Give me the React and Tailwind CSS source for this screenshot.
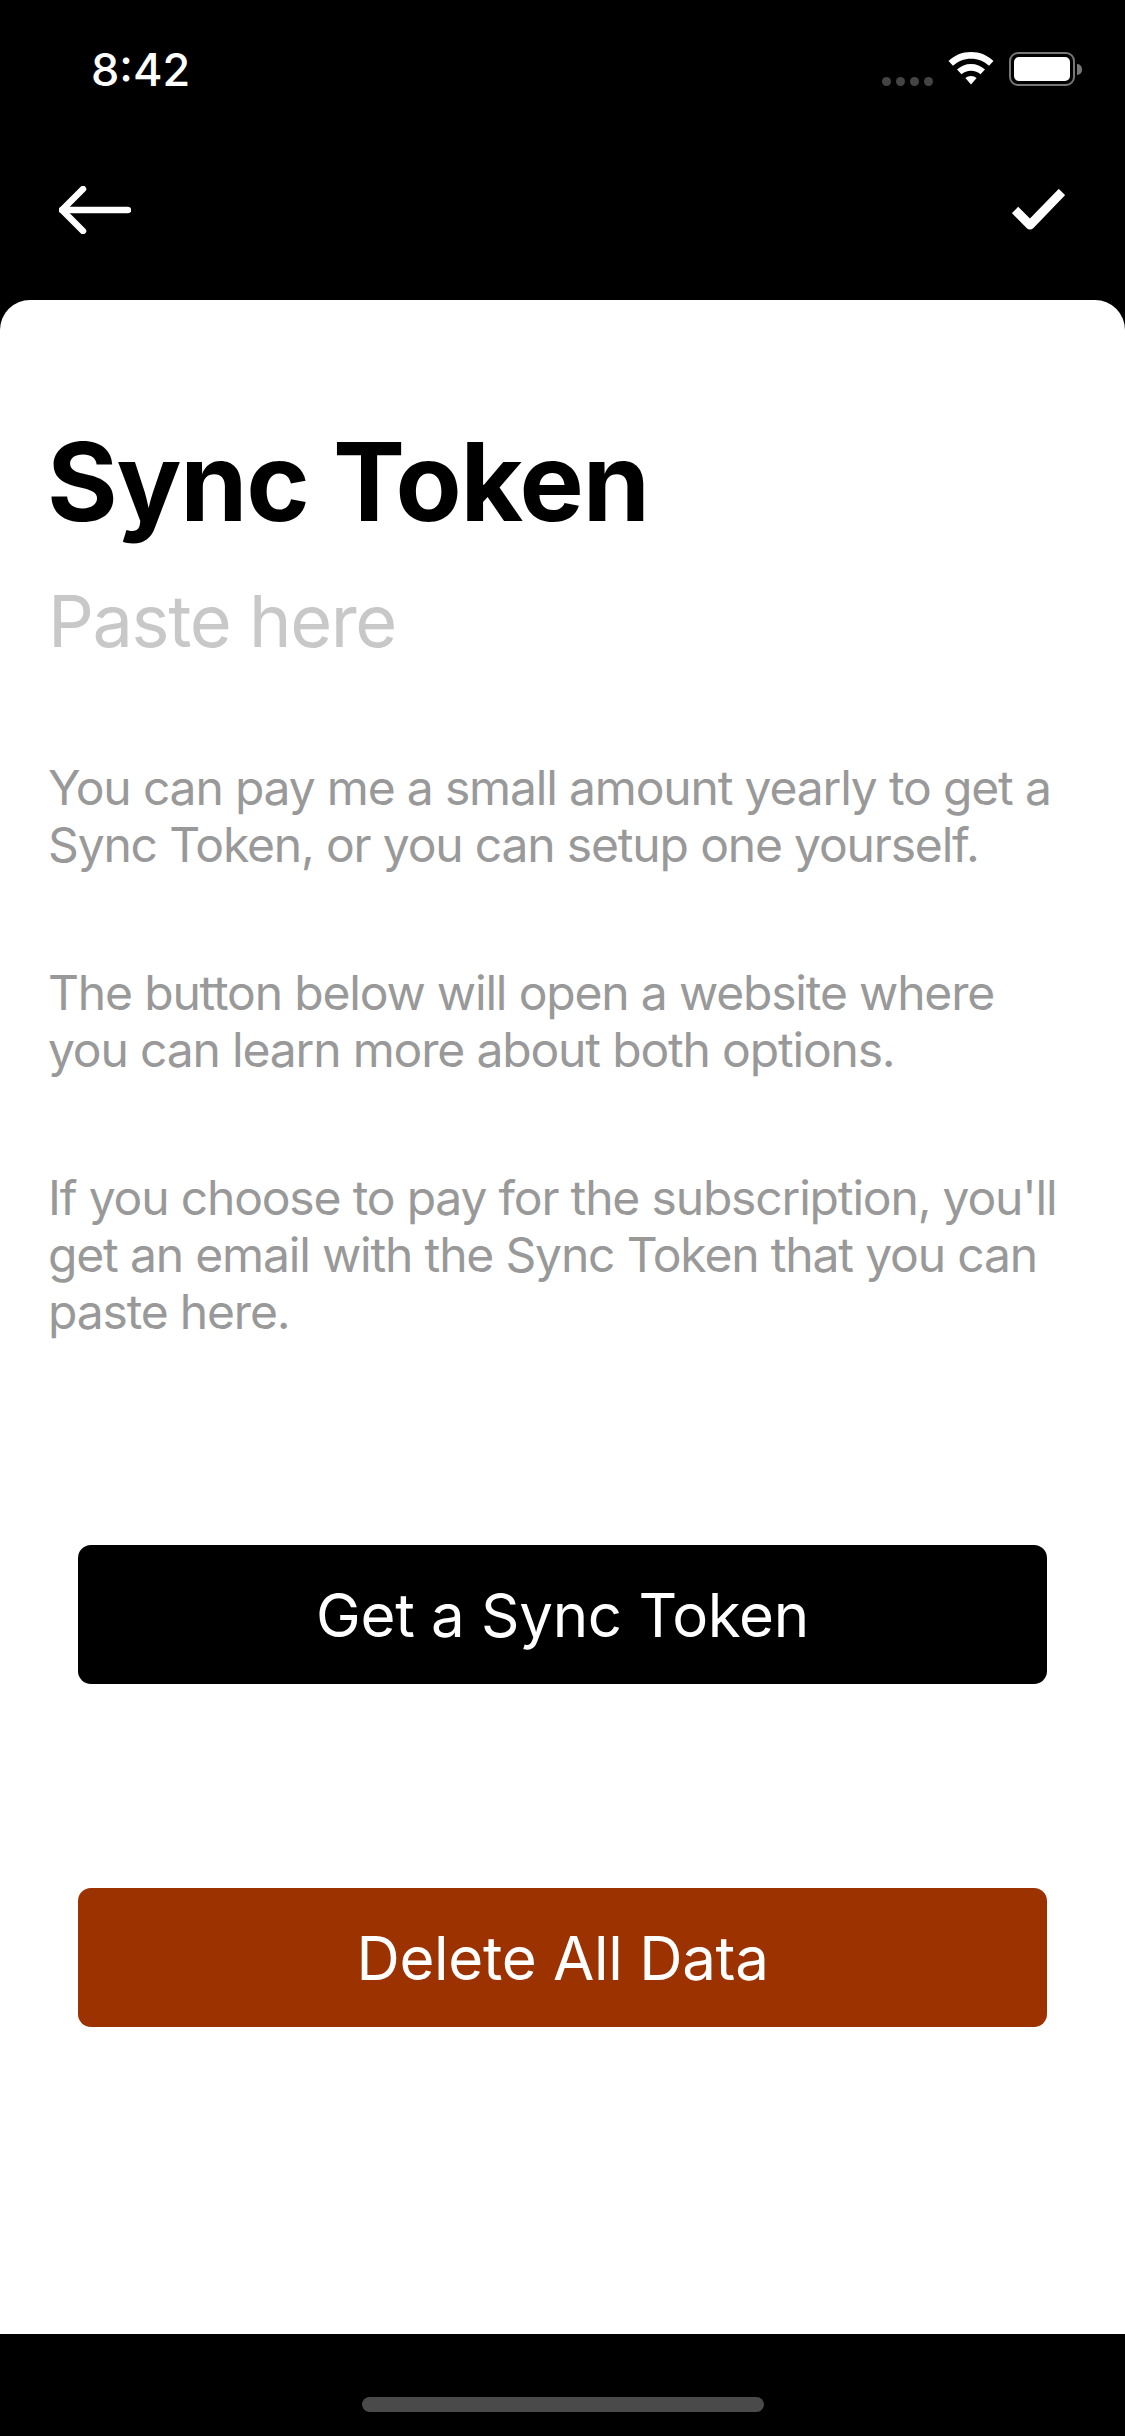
function StatusIcons() {
  return (
    <div className="flex items-center">
      <div className="flex gap-[5px] mt-[24px] mr-[15px]">
        <div className="h-[9px] w-[9px] rounded-full bg-[#444444]" />
        <div className="h-[9px] w-[9px] rounded-full bg-[#444444]" />
        <div className="h-[9px] w-[9px] rounded-full bg-[#444444]" />
        <div className="h-[9px] w-[9px] rounded-full bg-[#444444]" />
      </div>
      <svg width="46" height="34" viewBox="0 0 46 34" className="mr-[15px]">
        <path d="M23 0C14 0 6.500 3.300 0.500 9L5 13.800C10 9.200 16 6.800 23 6.800C30 6.800 36 9.200 41 13.800L45.500 9C39.500 3.300 32 0 23 0Z" fill="white" />
        <path d="M23 12C17.500 12 13 14 9 17.500L13.500 22.300C16 20 19.300 18.700 23 18.700C26.700 18.700 30 20 32.500 22.300L37 17.500C33 14 28.500 12 23 12Z" fill="white" />
        <path d="M23 24C20.800 24 18.900 24.700 17.400 26L23 32.500L28.600 26C27.100 24.700 25.200 24 23 24Z" fill="white" />
      </svg>
      <div className="flex items-center">
        <div className="h-[34px] w-[66px] rounded-[9px] border-[2px] border-[#777777] p-[3px]">
          <div className="h-full w-full rounded-[5px] bg-white" />
        </div>
        <div className="ml-[2px] h-[11px] w-[5px] rounded-r-full bg-[#777777]" />
      </div>
    </div>
  )
}

function ActionButton({ label, className }) {
  return (
    <button className={`flex h-[139px] w-full items-center justify-center rounded-[13px] text-[60px] tracking-[-0.300px] text-white ${className}`}>
      {label}
    </button>
  )
}

export default function App() {
  return (
    <div className="flex h-[2436px] w-[1125px] flex-col bg-black font-['Inter','Liberation_Sans',sans-serif]">
      <header className="h-[300px] shrink-0">
        <div className="flex h-[34px] items-center justify-between pl-[91px] pr-[43px] mt-[52px]">
          <span className="text-[45px] font-medium leading-none text-white">8:42</span>
          <StatusIcons />
        </div>
        <div className="mt-[100px] flex items-center justify-between pl-[59px] pr-[60px]">
          <svg width="72" height="48" viewBox="0 0 72 48" fill="none" stroke="white" strokeWidth="6.500" strokeLinecap="round" strokeLinejoin="round">
            <path d="M69 24H3" />
            <path d="M24 3L3 24L24 45" />
          </svg>
          <svg width="53" height="42" viewBox="0 0 53 42" fill="none" stroke="white" strokeWidth="9" strokeLinejoin="round">
            <path d="M3 21L18 36L50 3" />
          </svg>
        </div>
      </header>

      <main className="flex-1 rounded-t-[30px] bg-white pl-[48px] pr-[40px]">
        <h1 className="mt-[120px] -ml-[1px] text-[108px] font-bold leading-[124px] tracking-[-1.200px] text-black">Sync Token</h1>
        <p className="mt-[27px] text-[72px] leading-[100px] tracking-[-1.400px] text-[#c8c8c8]">Paste here</p>

        <div className="mt-[88px] text-[48px] leading-[57px] tracking-[-1.170px] text-[#999999]">
          <p>You can pay me a small amount yearly to get a<br />Sync Token, or you can setup one yourself.</p>
          <p className="mt-[91px]">The button below will open a website where<br />you can learn more about both options.</p>
          <p className="mt-[91px]">If you choose to pay for the subscription, you'll<br />get an email with the Sync Token that you can<br />paste here.</p>
        </div>

        <div className="mt-[205px] pl-[30px] pr-[38px]">
          <ActionButton label="Get a Sync Token" className="bg-black" />
          <ActionButton label="Delete All Data" className="mt-[204px] bg-[#9c3200]" />
        </div>
      </main>

      <footer className="flex h-[102px] shrink-0 justify-center pt-[63px]">
        <div className="h-[15px] w-[402px] rounded-full bg-[#4a4a4a]" />
      </footer>
    </div>
  )
}
